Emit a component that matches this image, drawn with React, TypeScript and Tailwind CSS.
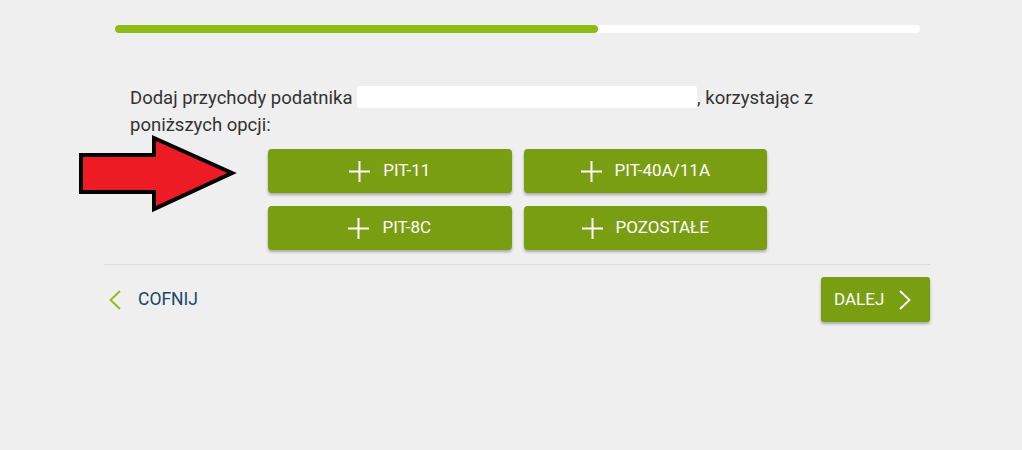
const options = ['PIT-11', 'PIT-40A/11A', 'PIT-8C', 'POZOSTAŁE'];

function PlusIcon() {
  return (
    <svg width="21" height="21" viewBox="0 0 21 21" className="shrink-0">
      <path d="M10.5 0v21M0 10.5h21" stroke="white" strokeWidth="2" fill="none" />
    </svg>
  );
}

function Chevron({ dir, className }: { dir: 'left' | 'right'; className?: string }) {
  return (
    <svg width="12" height="20" viewBox="0 0 12 20" className={className}>
      <path
        d={dir === 'left' ? 'M11 1L1.5 10L11 19' : 'M1 1L10.5 10L1 19'}
        stroke="currentColor"
        strokeWidth="1.8"
        fill="none"
      />
    </svg>
  );
}

export default function App() {
  return (
    <div className="relative min-h-[450px] w-full bg-[#efefef] font-['Roboto',sans-serif]">
      {/* annotation arrow */}
      <svg className="absolute left-[76px] top-[134px]" width="162" height="80" viewBox="0 0 162 80">
        <polygon
          points="5,21 78,21 78,4 156,39 78,75 78,58 5,58"
          fill="#ed1c24"
          stroke="#000"
          strokeWidth="4"
          strokeLinejoin="miter"
        />
      </svg>

      <div className="ml-[104px] w-[826px]">
        {/* Progress */}
        <div className="pt-[25px] pl-[11px] pr-[10px]">
          <div className="h-2 w-full rounded-full bg-white">
            <div className="h-2 w-[60%] rounded-full bg-[#8fbc14]" />
          </div>
        </div>

        {/* Intro text */}
        <p className="mt-[49px] pl-[26px] pr-[80px] text-[18.5px] leading-[27px] text-[#333]">
          Dodaj przychody podatnika{' '}
          <span className="inline-block h-[22px] w-[340px] translate-y-[4px] rounded-[3px] bg-white align-baseline" />
          , korzystając z poniższych opcji:
        </p>

        {/* Options */}
        <div className="mt-[10px] ml-[164px] grid w-[499px] grid-cols-2 gap-x-[12px] gap-y-[13px]">
          {options.map((o) => (
            <button
              key={o}
              className="flex h-[44px] items-center justify-center gap-[13px] rounded-[4px] bg-[#7a9e12] text-[17px] font-normal text-white shadow-[0_2px_3px_rgba(0,0,0,0.3)]"
            >
              <PlusIcon />
              <span>{o}</span>
            </button>
          ))}
        </div>

        {/* Footer */}
        <div className="mt-[14px] border-t border-[#dcdcdc]">
          <div className="mt-[12px] flex items-center justify-between">
            <button className="ml-[5px] flex items-center gap-[17px] text-[17.5px] text-[#15476a]">
              <Chevron dir="left" className="text-[#8fbc14]" />
              <span>COFNIJ</span>
            </button>
            <button className="flex h-[45px] w-[109px] items-center gap-[15px] rounded-[3px] bg-[#7a9e12] pl-[13px] text-[17px] font-normal text-white shadow-[0_2px_3px_rgba(0,0,0,0.3)]">
              <span>DALEJ</span>
              <Chevron dir="right" className="text-white" />
            </button>
          </div>
        </div>
      </div>
    </div>
  );
}
